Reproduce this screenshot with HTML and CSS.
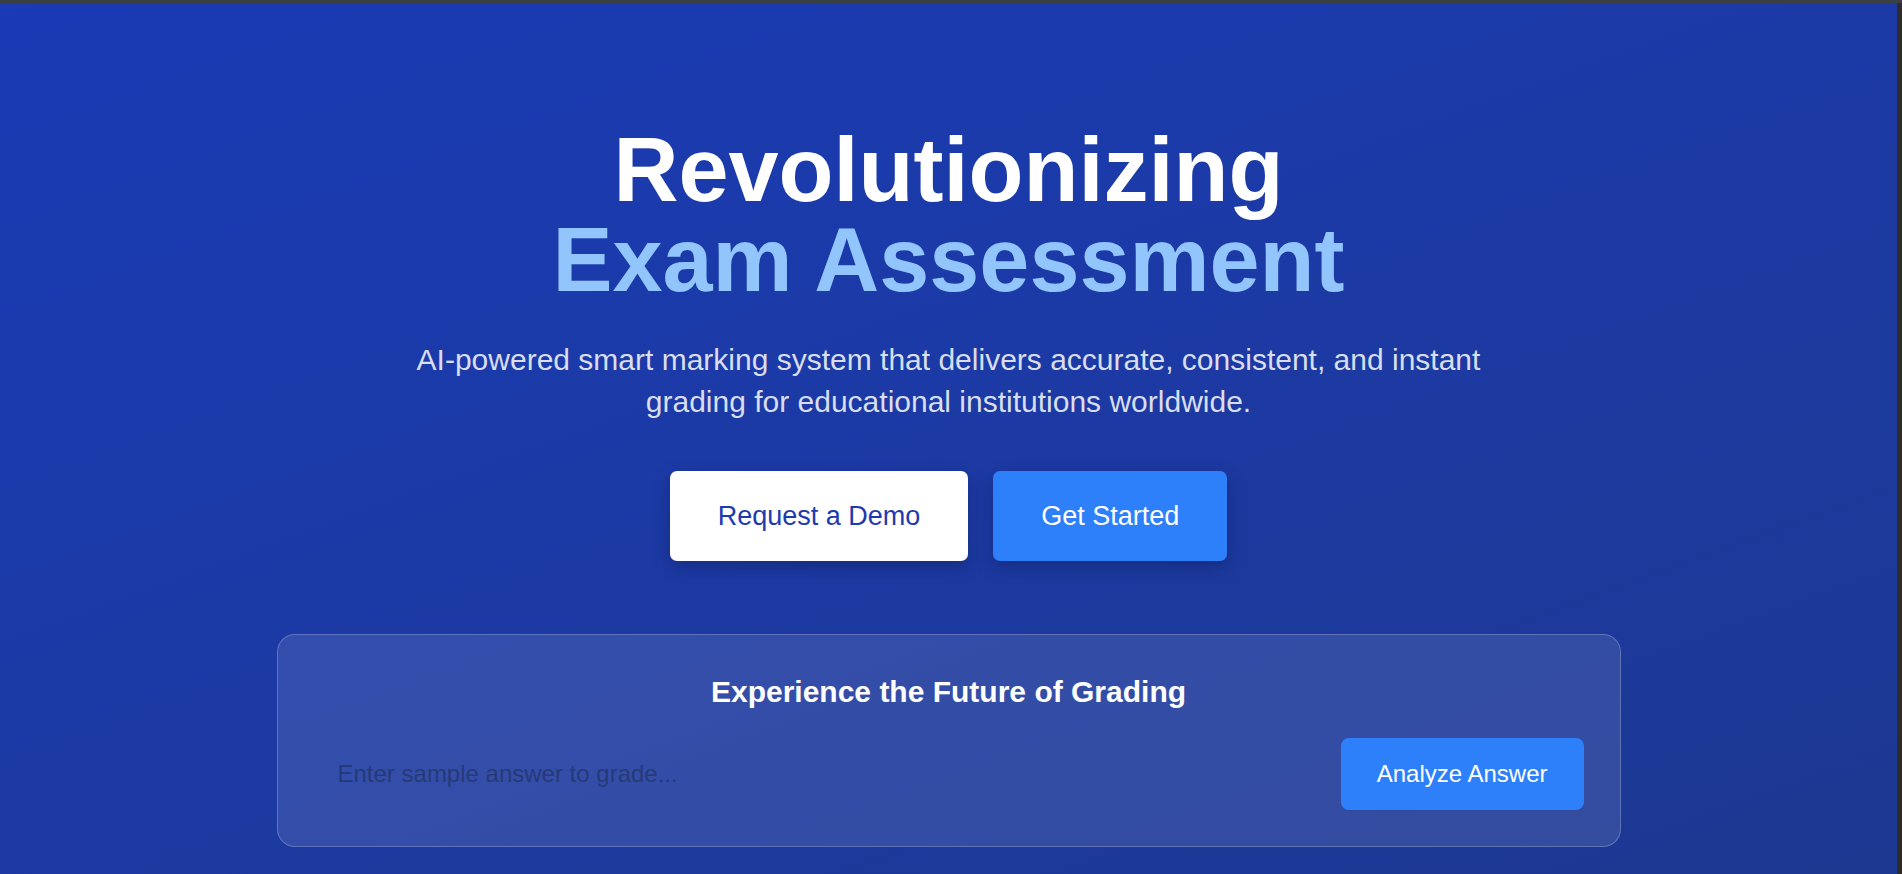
FILE: index.html
```html
<!DOCTYPE html>
<html lang="en">
<head>
<meta charset="utf-8">
<title>Smart Marking</title>
<link rel="stylesheet" href="styles.css">
</head>
<body>
<div class="frame">
  <div class="topbar"></div>
  <div class="viewport">
    <main class="hero">
      <h1 class="hero-title"><span class="line">Revolutionizing</span><span class="line accent">Exam Assessment</span></h1>
      <p class="hero-sub">AI-powered smart marking system that delivers accurate, consistent, and instant grading for educational institutions worldwide.</p>
      <div class="hero-actions">
        <a class="btn btn-light" href="#">Request a Demo</a>
        <a class="btn btn-primary" href="#">Get Started</a>
      </div>
      <section class="demo-card">
        <h2 class="demo-title">Experience the Future of Grading</h2>
        <div class="demo-row">
          <input class="demo-input" type="text" placeholder="Enter sample answer to grade...">
          <button class="demo-btn" type="button">Analyze Answer</button>
        </div>
      </section>
    </main>
    <div class="scrollbar"></div>
  </div>
</div>
</body>
</html>
```

FILE: styles.css
```css
* { box-sizing: border-box; }
html, body { margin: 0; padding: 0; height: 100%; }
body {
  font-family: "Liberation Sans", Arial, sans-serif;
  background: #2b2b2b;
  overflow: hidden;
}
.frame {
  display: flex;
  flex-direction: column;
  height: 874px;
}
.topbar {
  height: 3px;
  background: #3a3f42;
  flex: none;
}
.viewport {
  flex: 1;
  display: flex;
  min-height: 0;
}
.scrollbar {
  width: 5px;
  flex: none;
  background: #2c2c2c;
}
.hero {
  flex: 1;
  display: flex;
  flex-direction: column;
  align-items: center;
  padding: 122px 0 0;
  background: linear-gradient(160deg, #1a3ab6 0%, #1c3aa6 45%, #1d3891 100%);
  text-align: center;
}
.hero-title {
  margin: 0;
  display: flex;
  flex-direction: column;
  align-items: center;
  font-size: 90px;
  font-weight: 700;
  line-height: 1;
  color: #ffffff;
}
.line { display: block; }
.accent { color: #93c5fd; }
.hero-sub {
  margin: 34px 0 0;
  max-width: 1100px;
  font-size: 30px;
  line-height: 1.4;
  color: #d8deec;
}
.hero-actions {
  display: flex;
  gap: 25px;
  margin-top: 48px;
}
.btn {
  display: inline-block;
  padding: 29px 48px;
  font-size: 27px;
  line-height: 32px;
  border-radius: 7px;
  text-decoration: none;
  box-shadow: 0 6px 16px rgba(10, 20, 70, 0.35);
}
.btn-light {
  background: #ffffff;
  color: #1d3aaf;
}
.btn-primary {
  background: #2e7ffa;
  color: #ffffff;
}
.demo-card {
  width: 1344px;
  margin-top: 73px;
  padding: 37px 36px 36px;
  background: rgba(255, 255, 255, 0.1);
  border: 1px solid rgba(255, 255, 255, 0.22);
  border-radius: 18px;
}
.demo-title {
  margin: 0 0 27px;
  font-size: 30px;
  font-weight: 700;
  line-height: 1.3;
  color: #ffffff;
}
.demo-row {
  display: flex;
  align-items: center;
  gap: 16px;
}
.demo-input {
  flex: 1;
  height: 72px;
  padding: 0 24px;
  border: none;
  background: transparent;
  font-family: inherit;
  font-size: 24px;
  color: #ffffff;
  outline: none;
}
.demo-input::placeholder { color: #263a78; }
.demo-btn {
  height: 72px;
  padding: 0 36px;
  border: none;
  border-radius: 8px;
  background: #2e7ffa;
  color: #ffffff;
  font-family: inherit;
  font-size: 24px;
}
```
